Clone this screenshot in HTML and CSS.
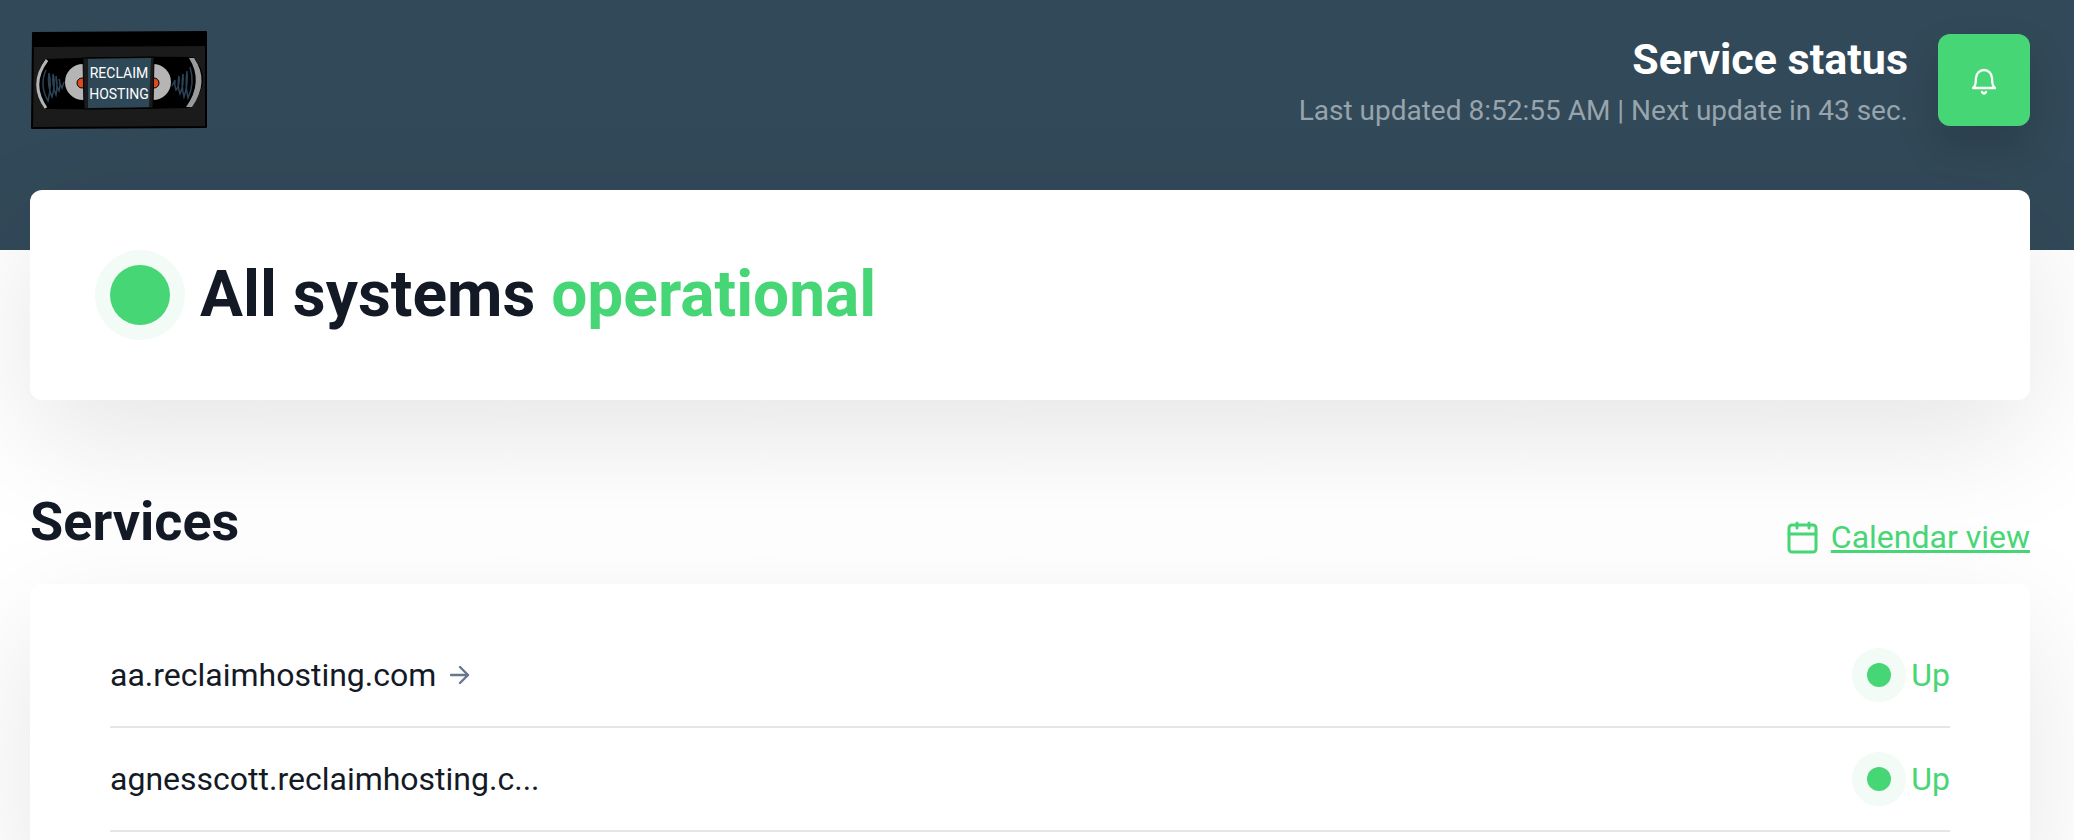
FILE: index.html
```html
<!DOCTYPE html>
<html lang="en">
<head>
    <meta charset="UTF-8">
    <meta name="viewport" content="width=device-width, initial-scale=1.0">
    <title>Service status</title>
    <link rel="stylesheet" href="styles.css">
</head>
<body>
    <header class="page-header">
        <div class="container header-row">
            <a href="#" class="logo" aria-label="Reclaim Hosting">
                <svg width="180" height="102" viewBox="0 0 180 102">
                    <path d="M3 3 L176 2 L176 97 L2 98 Z" fill="#1b1b1b" stroke="#000" stroke-width="2" stroke-linejoin="round"/>
                    <path d="M3 3 L176 2 L176 16 L3 17 Z" fill="#000"/>
                    <path d="M15 29 Q90 26 163 27 Q185 50 159 78 Q90 80 15 79 Q-2 54 15 29 Z" fill="#000"/>
                    <path d="M17 30 Q-1 54 16 78" fill="none" stroke="#b5b5b5" stroke-width="3"/>
                    <path d="M159 28 L164 28 Q180 51 162 77 L156 77 Q174 52 159 28 Z" fill="#9a9a9a"/>
                    <path d="M16 40 Q9 55 18 71 Q22 55 19 43 Q17 55 22 67 Q26 54 23 44 Q22 55 26 65 Q28 55 26 46 Q26 55 29 61 Q31 54 29 49 Q30 55 32 58 L34 52" fill="none" stroke="#2b4356" stroke-width="1.5"/>
                    <path d="M160 37 Q165 53 158 68 Q155 55 157 41 Q158 55 154 67 Q151 55 153 44 Q154 55 150 64 Q147 55 149 46 Q150 55 146 60 Q144 55 145 50 L142 56" fill="none" stroke="#2b4356" stroke-width="1.5"/>
                    <circle cx="53" cy="52" r="18" fill="#b5b5b5"/>
                    <circle cx="123" cy="52" r="18" fill="#b5b5b5"/>
                    <circle cx="52" cy="53" r="5" fill="#e0481e" stroke="#000"/>
                    <circle cx="124" cy="53" r="5" fill="#e0481e" stroke="#000"/>
                    <path d="M53 28 L124 27 L123 78 L54 79 Z" fill="#1b1b1b" stroke="#000"/>
                    <path d="M58 29 L121 28 L119 77 L58 78 Z" fill="#2f4858"/>
                    <text class="logo-text" x="89" y="48">RECLAIM</text>
                    <text class="logo-text" x="89" y="69">HOSTING</text>
                </svg>
            </a>
            <div class="header-info">
                <div class="header-text">
                    <h1>Service status</h1>
                    <p>Last updated 8:52:55 AM | Next update in 43 sec.</p>
                </div>
                <button type="button" class="bell-button" aria-label="Subscribe">
                    <svg width="32" height="32" viewBox="0 0 32 32" fill="none" stroke="#fff" stroke-width="2.3" stroke-linecap="round" stroke-linejoin="round">
                        <path d="M5 24 Q8 22 8 14 A8 8 0 0 1 24 14 Q24 22 27 24 Z"/>
                        <path d="M14 28 Q16 31 18 28"/>
                    </svg>
                </button>
            </div>
        </div>
    </header>

    <main class="container">
        <section class="card overall">
            <span class="dot dot-large"></span>
            <h2>All systems <span class="green">operational</span></h2>
        </section>

        <div class="section-head">
            <h3>Services</h3>
            <a href="#" class="calendar-link">
                <svg width="32" height="34" viewBox="0 0 32 34" fill="none" stroke="currentColor" stroke-width="3" stroke-linecap="round">
                    <rect x="2" y="5" width="27" height="27" rx="3"/>
                    <path d="M2 14h27M10 3v5M22 3v5"/>
                </svg>
                <span>Calendar view</span>
            </a>
        </div>

        <section class="card services">
            <div class="service">
                <a href="#" class="service-name">
                    <span>aa.reclaimhosting.com</span>
                    <svg width="20" height="20" viewBox="0 0 20 20" fill="none" stroke="#687790" stroke-width="2.4" stroke-linecap="round" stroke-linejoin="round">
                        <path d="M1 10h17M10 2l8 8-8 8"/>
                    </svg>
                </a>
                <span class="status"><span class="dot"></span>Up</span>
            </div>
            <div class="service">
                <a href="#" class="service-name">
                    <span>agnesscott.reclaimhosting.c...</span>
                </a>
                <span class="status"><span class="dot"></span>Up</span>
            </div>
        </section>
    </main>
</body>
</html>
```
FILE: styles.css
```css
* {
    box-sizing: border-box;
}
body {
    margin: 0;
    background-color: #ffffff;
    color: #131a26;
    font-family: Roboto, sans-serif;
    font-size: 32px;
    height: 100vh;
    overflow: hidden;
}
h1, h2, h3, p {
    margin: 0;
}
.container {
    padding: 0 44px 0 30px;
}
.page-header {
    background-color: #324959;
    height: 250px;
    padding-top: 30px;
}
.header-row {
    display: flex;
    justify-content: space-between;
    align-items: flex-start;
}
.logo svg {
    display: block;
}
.logo-text {
    fill: #ffffff;
    font-family: Roboto, sans-serif;
    font-size: 14px;
    text-anchor: middle;
}
.header-info {
    display: flex;
    align-items: flex-start;
    gap: 30px;
    padding-top: 4px;
}
.header-text {
    text-align: right;
}
.header-text h1 {
    color: #ffffff;
    font-size: 43px;
    line-height: 50px;
}
.header-text p {
    color: #98a4ac;
    font-size: 28px;
    line-height: 54px;
}
.bell-button {
    display: flex;
    align-items: center;
    justify-content: center;
    width: 92px;
    height: 92px;
    padding: 0;
    border: none;
    border-radius: 12px;
    background-color: #47d675;
    box-shadow: 0 20px 40px rgba(0, 0, 0, 0.15);
    cursor: pointer;
}
.card {
    background-color: #ffffff;
    border-radius: 12px;
    box-shadow: 0 40px 120px rgba(0, 0, 0, 0.1);
}
.overall {
    display: flex;
    align-items: center;
    gap: 30px;
    height: 210px;
    margin-top: -60px;
    padding: 0 80px;
}
.overall h2 {
    font-size: 64px;
    line-height: 80px;
}
.green {
    color: #47d675;
}
.dot {
    width: 24px;
    height: 24px;
    border-radius: 50%;
    background-color: #47d675;
    box-shadow: 0 0 0 15px #f2fbf6;
}
.dot-large {
    width: 60px;
    height: 60px;
}
.section-head {
    display: flex;
    justify-content: space-between;
    align-items: flex-end;
    padding: 90px 0 30px;
}
.section-head h3 {
    font-size: 54px;
    line-height: 64px;
}
.calendar-link {
    display: flex;
    align-items: center;
    gap: 12px;
    color: #47d675;
    line-height: 34px;
    text-decoration: none;
}
.calendar-link span {
    text-decoration: underline;
}
.services {
    padding: 40px 80px;
}
.service {
    display: flex;
    justify-content: space-between;
    align-items: center;
    height: 104px;
    border-bottom: 2px solid #e6e6e6;
}
.service-name {
    display: flex;
    align-items: center;
    gap: 14px;
    color: inherit;
    text-decoration: none;
}
.status {
    display: flex;
    align-items: center;
    gap: 20px;
    color: #47d675;
}
```
